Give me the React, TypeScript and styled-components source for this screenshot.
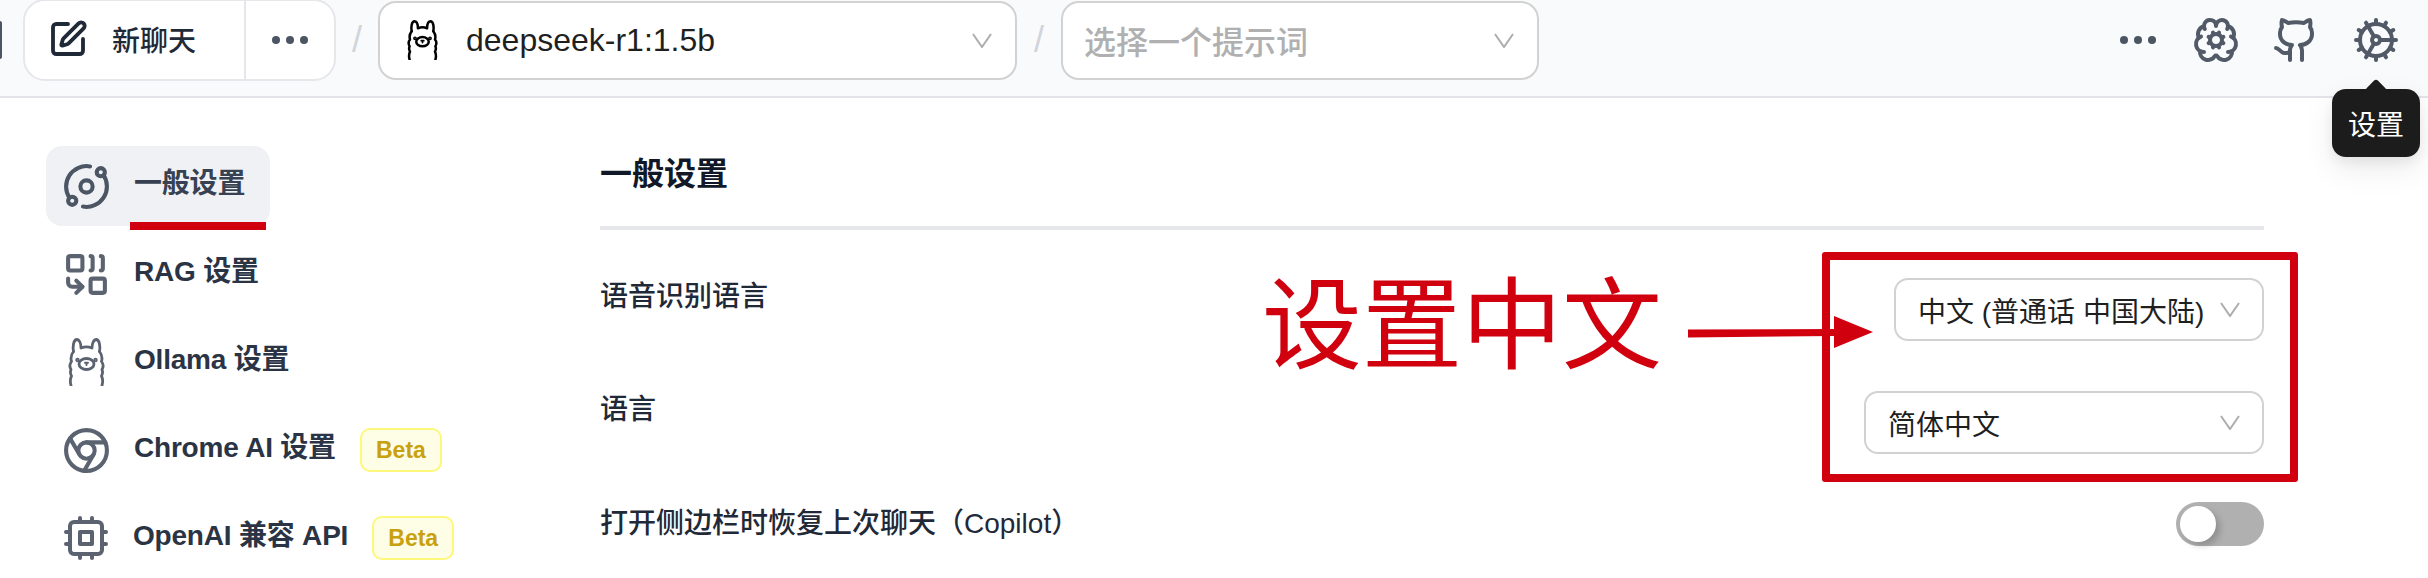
import React from "react";
import styled, { createGlobalStyle } from "styled-components";
import { SquarePen, BrainCog, Github, Cog, Orbit, Combine, Chrome } from "lucide-react";

const Global = createGlobalStyle`
  html, body { margin: 0; padding: 0; background: #fff; }
  body { font-family: "Liberation Sans", "Noto Sans CJK SC", sans-serif; }
  * { box-sizing: border-box; }
`;

const Page = styled.div`
  position: relative;
  width: 2428px;
  height: 578px;
  overflow: hidden;
  background: #fff;
`;

const Header = styled.header`
  display: flex;
  align-items: center;
  height: 98px;
  padding: 0 28px 16px 0;
  background: #f9fafb;
  border-bottom: 2px solid #e3e4ea;
`;

const LeftCut = styled.div`
  width: 2px;
  height: 38px;
  margin-right: 21px;
  background: #4b5563;
  border-radius: 0 3px 3px 0;
`;

const ChatGroup = styled.div`
  display: flex;
  width: 313px;
  height: 82px;
  background: #fff;
  border: 2px solid #e5e7eb;
  border-radius: 22px;
`;

const NewChat = styled.div`
  display: flex;
  align-items: center;
  gap: 24px;
  width: 221px;
  padding: 0 0 2px 23px;
  border-right: 2px solid #e5e7eb;
  color: #1f2937;
  font-size: 28px;
  font-weight: 500;
  svg { color: #1f2937; flex: none; }
`;

const MoreCell = styled.div`
  display: flex;
  flex: 1;
  align-items: center;
  justify-content: center;
  color: #4b5563;
`;

const Slash = styled.span`
  display: flex;
  justify-content: center;
  width: ${(p: { $w: number }) => p.$w}px;
  color: #d1d5db;
  font-size: 36px;
  line-height: 1;
`;

const TopSelect = styled.div<{ $w: number; $pad: number }>`
  display: flex;
  align-items: center;
  width: ${(p) => p.$w}px;
  height: 79px;
  padding: 0 23px 0 ${(p) => p.$pad}px;
  background: #fff;
  border: 2px solid #d2d2d2;
  border-radius: 18px;
`;

const ModelName = styled.span`
  flex: 1;
  margin-left: 28px;
  color: #1f1f1f;
  font-size: 32px;
`;

const Placeholder = styled.span`
  flex: 1;
  color: #b0b0b0;
  font-size: 32px;
  font-weight: 500;
`;

const Actions = styled.div`
  display: flex;
  align-items: center;
  gap: 32px;
  margin-left: auto;
  color: #525a68;
`;

const ActionDots = styled.div`
  display: flex;
  margin-right: 4px;
  color: #4b5563;
`;

const Tooltip = styled.div`
  position: absolute;
  top: 89px;
  left: 2332px;
  display: flex;
  align-items: center;
  justify-content: center;
  width: 88px;
  height: 68px;
  background: #1c1c1c;
  border-radius: 14px;
  color: #fff;
  font-size: 28px;
  box-shadow: 0 12px 32px rgba(0, 0, 0, 0.08), 0 6px 12px rgba(0, 0, 0, 0.06);
  &::before {
    content: "";
    position: absolute;
    top: -7px;
    left: 36px;
    width: 16px;
    height: 16px;
    background: #1c1c1c;
    border-radius: 3px;
    transform: rotate(45deg);
  }
`;

const Body = styled.div`
  display: flex;
  padding-left: 46px;
`;

const Sidebar = styled.nav`
  display: flex;
  flex-direction: column;
  align-items: flex-start;
  gap: 8px;
  width: 554px;
  padding-top: 48px;
`;

const NavItem = styled.div<{ $active?: boolean }>`
  position: relative;
  display: flex;
  align-items: center;
  height: 80px;
  padding: 0 25px 0 16px;
  background: ${(p) => (p.$active ? "#f0f1f5" : "transparent")};
  border-radius: 16px;
  color: ${(p) => (p.$active ? "#4b5563" : "#5b6270")};
  svg { flex: none; }
`;

const NavText = styled.span<{ $active?: boolean }>`
  margin: 0 0 11px 23px;
  color: ${(p) => (p.$active ? "#374151" : "#2b3444")};
  font-size: 28px;
  font-weight: 600;
  letter-spacing: -0.2px;
  white-space: nowrap;
`;

const Beta = styled.span`
  display: flex;
  align-items: center;
  justify-content: center;
  width: 82px;
  height: 44px;
  margin-left: 24px;
  background: #fefee6;
  border: 2px solid #fdf87a;
  border-radius: 10px;
  color: #c9a10e;
  font-size: 23px;
  font-weight: 700;
`;

const Underline = styled.div`
  position: absolute;
  top: 76px;
  left: 84px;
  width: 136px;
  height: 8px;
  background: #d0000f;
`;

const Main = styled.main`
  width: 1664px;
  padding-top: 52px;
`;

const Heading = styled.h2`
  margin: 0 0 48px;
  padding-bottom: 28px;
  border-bottom: 4px solid #e5e7eb;
  color: #111827;
  font-size: 32px;
  font-weight: 700;
  line-height: 48px;
`;

const Row = styled.div<{ $height: number; $center?: boolean }>`
  display: flex;
  align-items: ${(p) => (p.$center ? "center" : "flex-start")};
  justify-content: space-between;
  height: ${(p) => p.$height}px;
`;

const Label = styled.span`
  color: #1f2937;
  font-size: 28px;
  font-weight: 500;
  line-height: 38px;
`;

const FieldSelect = styled.div<{ $w: number }>`
  display: flex;
  align-items: center;
  width: ${(p) => p.$w}px;
  height: 63px;
  padding: 0 22px 0 22px;
  border: 2px solid #d2d2d2;
  border-radius: 14px;
  color: #1f1f1f;
  font-size: 28px;
  white-space: nowrap;
`;

const FieldValue = styled.span`
  flex: 1;
`;

const Toggle = styled.div`
  position: relative;
  width: 88px;
  height: 44px;
  background: #b0b0b0;
  border-radius: 22px;
  &::after {
    content: "";
    position: absolute;
    top: 4px;
    left: 4px;
    width: 36px;
    height: 36px;
    background: #fff;
    border-radius: 50%;
    box-shadow: 4px 4px 6px rgba(0, 0, 0, 0.18);
  }
`;

const RedBox = styled.div`
  position: absolute;
  top: 252px;
  left: 1822px;
  width: 476px;
  height: 230px;
  border: 8px solid #d0000f;
  border-radius: 3px;
`;

const BigNote = styled.div`
  position: absolute;
  top: 266px;
  left: 1262px;
  color: #d0000f;
  font-size: 100px;
  line-height: 120px;
  white-space: nowrap;
`;

const ArrowMark = styled.svg`
  position: absolute;
  top: 314px;
  left: 1688px;
`;

const Chevron = () => (
  <svg width="20" height="15" viewBox="0 0 20 15" fill="none" style={{ flex: "none" }}>
    <path d="M1 1l9 13 9-13" stroke="#adadad" strokeWidth="2" />
  </svg>
);

const Dots = () => (
  <svg width="36" height="8" viewBox="0 0 36 8" fill="currentColor">
    <circle cx="4" cy="4" r="4" />
    <circle cx="18" cy="4" r="4" />
    <circle cx="32" cy="4" r="4" />
  </svg>
);

const Llama = ({ w, h, sw }: { w: number; h: number; sw: number }) => (
  <svg width={w} height={h} viewBox="0 0 37 48" fill="none" stroke="currentColor" strokeWidth={sw} strokeLinecap="round" strokeLinejoin="round" style={{ flex: "none" }}>
    <path d="M5.500 13.500C4.500 9 5.500 2 8.500 1.500c3 0 4.500 4 4.500 8.500 3-1.300 8-1.300 11 0 0-4.500 1.500-8.500 4.500-8.500 3 .5 4 7.500 3 12" />
    <path d="M5.500 13.500C3.500 16 2.500 20 3.500 23.500c-2 2.500-2 5.500-.5 8-1 2.500-1 4 .5 6.500-1.500 3-1.500 6-.5 9.500" />
    <path d="M31.500 13.500c2 2.500 3 6.500 2 10 2 2.500 2 5.500.5 8 1 2.500 1 4-.5 6.500 1.500 3 1.500 6 .5 9.500" />
    <ellipse cx="18.500" cy="26" rx="7.500" ry="5.500" />
    <path d="M17 24.800h3M18.500 25v2" strokeWidth={sw * 0.7} />
    <circle cx="9.500" cy="22" r="0.800" fill="currentColor" />
    <circle cx="27.500" cy="22" r="0.800" fill="currentColor" />
  </svg>
);

const Chip = () => (
  <svg width="48" height="48" viewBox="0 0 24 24" fill="none" stroke="currentColor" strokeWidth="2" strokeLinecap="round" strokeLinejoin="round">
    <rect x="4" y="4" width="16" height="16" rx="2" />
    <rect x="9" y="9" width="6" height="6" />
    <path d="M15 2v2M15 20v2M2 15h2M2 9h2M20 15h2M20 9h2M9 2v2M9 20v2" />
  </svg>
);

export default function App() {
  return (
    <Page>
      <Global />
      <Header>
        <LeftCut />
        <ChatGroup>
          <NewChat>
            <SquarePen size={40} strokeWidth={2.3} />
            新聊天
          </NewChat>
          <MoreCell>
            <Dots />
          </MoreCell>
        </ChatGroup>
        <Slash $w={42}>/</Slash>
        <TopSelect $w={639} $pad={27}>
          <Llama w={31} h={40} sw={3} />
          <ModelName>deepseek-r1:1.5b</ModelName>
          <Chevron />
        </TopSelect>
        <Slash $w={44}>/</Slash>
        <TopSelect $w={478} $pad={21}>
          <Placeholder>选择一个提示词</Placeholder>
          <Chevron />
        </TopSelect>
        <Actions>
          <ActionDots>
            <Dots />
          </ActionDots>
          <BrainCog size={48} strokeWidth={2} />
          <Github size={48} strokeWidth={2} />
          <Cog size={48} strokeWidth={2} />
        </Actions>
      </Header>
      <Body>
        <Sidebar>
          <NavItem $active>
            <Orbit size={49} strokeWidth={2} />
            <NavText $active>一般设置</NavText>
            <Underline />
          </NavItem>
          <NavItem>
            <Combine size={49} strokeWidth={2} />
            <NavText>RAG 设置</NavText>
          </NavItem>
          <NavItem>
            <Llama w={49} h={48} sw={2.8} />
            <NavText>Ollama 设置</NavText>
          </NavItem>
          <NavItem>
            <Chrome size={49} strokeWidth={2} />
            <NavText>Chrome AI 设置</NavText>
            <Beta>Beta</Beta>
          </NavItem>
          <NavItem>
            <Chip />
            <NavText>OpenAI 兼容 API</NavText>
            <Beta>Beta</Beta>
          </NavItem>
        </Sidebar>
        <Main>
          <Heading>一般设置</Heading>
          <Row $height={113}>
            <Label>语音识别语言</Label>
            <FieldSelect $w={370}>
              <FieldValue>中文 (普通话 中国大陆)</FieldValue>
              <Chevron />
            </FieldSelect>
          </Row>
          <Row $height={111}>
            <Label>语言</Label>
            <FieldSelect $w={400}>
              <FieldValue>简体中文</FieldValue>
              <Chevron />
            </FieldSelect>
          </Row>
          <Row $height={44} $center>
            <Label>打开侧边栏时恢复上次聊天（Copilot）</Label>
            <Toggle />
          </Row>
        </Main>
      </Body>
      <Tooltip>设置</Tooltip>
      <BigNote>设置中文</BigNote>
      <RedBox />
      <ArrowMark width="186" height="36" viewBox="0 0 186 36">
        <path d="M0 15.500 L147 15 V22 L0 23.500Z" fill="#d0000f" />
        <path d="M146 2 L185 18 L146 34Z" fill="#d0000f" />
      </ArrowMark>
    </Page>
  );
}
